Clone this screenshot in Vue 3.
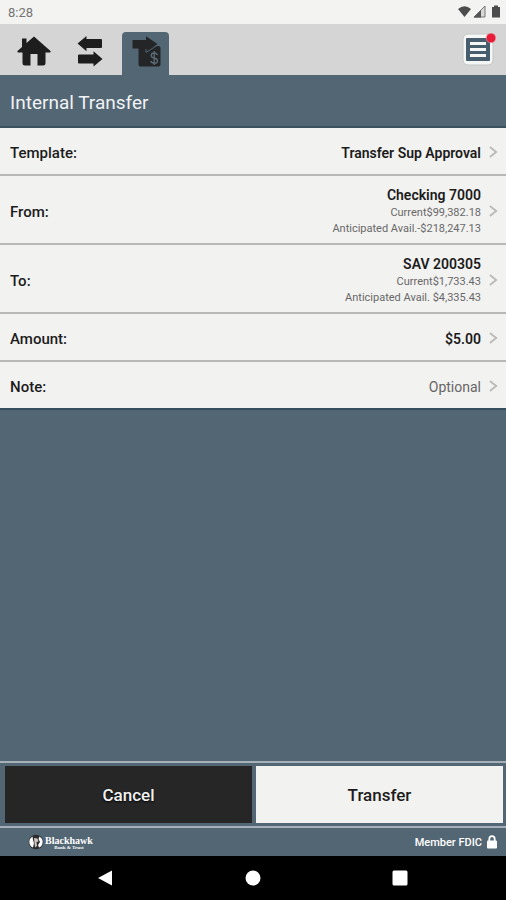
<script setup>
const rows = [
  { label: 'Template:', value: 'Transfer Sup Approval' },
  {
    label: 'From:',
    value: 'Checking 7000',
    details: ['Current$99,382.18', 'Anticipated Avail.-$218,247.13'],
  },
  {
    label: 'To:',
    value: 'SAV 200305',
    details: ['Current$1,733.43', 'Anticipated Avail. $4,335.43'],
  },
  { label: 'Amount:', value: '$5.00' },
  { label: 'Note:', value: 'Optional', placeholder: true },
]
</script>

<template>
  <div class="screen">
    <div class="status">
      <span>8:28</span>
      <svg class="status-icons" viewBox="0 0 44 14" aria-hidden="true">
        <path d="M1 4 Q7.500 -1.500 14 4 L7.500 12 Z" fill="#4c4c4c" />
        <path d="M17 12 L28 1 V12 Z" fill="#d8d8d6" stroke="#777" />
        <path d="M16.500 12.500 L24 5 V12.500 Z" fill="#555" />
        <path d="M35 2 H37 V.5 H41 V2 H43 V12.500 H35 Z" fill="#4c4c4c" />
      </svg>
    </div>

    <nav class="toolbar">
      <button class="tab" aria-label="Home">
        <svg class="home" viewBox="0 0 34 30">
          <path
            d="M17 .5 L9.500 7 V2.500 H5 V11 L.5 15 Q0 16 1 16.500 H5.500 V27 Q5.500 29.500 8 29.500 H13.500 V18 H20.500 V29.500 H26 Q28.500 29.500 28.500 27 V16.500 H33 Q34 16 33.500 15 Z"
            fill="#1d1d1d"
          />
        </svg>
      </button>
      <button class="tab" aria-label="Transfers">
        <svg class="arrows" viewBox="0 0 26 32">
          <path
            d="M.5 7.500 L9.500 0 V3 H24 Q25 3 25 4 V11 Q25 12 24 12 H9.500 V15.300 Z M25.500 23 L16.500 15.300 V18.500 H2 Q1 18.500 1 19.500 V26.500 Q1 27.500 2 27.500 H16.500 V30.500 Z"
            fill="#1d1d1d"
          />
        </svg>
      </button>
      <button class="tab active" aria-label="Internal transfer">
        <svg class="transfer" viewBox="0 0 30 32">
          <path
            d="M8 11 H21 L25 10 H27.500 Q29.500 10 29.500 12 V28.500 Q29.500 30.500 27.500 30.500 H9.500 Q7.500 30.500 7.500 28.500 V12 Z"
            fill="#232526"
          />
          <path d="M1.500 4 H15 V.3 L26.500 8 L15 16 V12.500 H1.500 Z" fill="#232526" />
          <path d="M15 13 V16.500 L27 8.800" fill="none" stroke="#536674" />
          <path
            d="M26.500 19 Q25.500 17 23.200 17 Q20.200 17 20.200 19.500 Q20.200 21.500 23.200 22 Q26.500 22.500 26.500 25 Q26.500 27.200 23.500 27.200 Q20.500 27.200 19.700 25 M23.200 15 V29"
            fill="none"
            stroke="#5b6c78"
            stroke-width="1.300"
          />
        </svg>
      </button>
      <button class="menu" aria-label="Messages">
        <svg viewBox="0 0 34 34">
          <rect x="1" y="1" width="30" height="31" rx="5" fill="#f4f5f5" stroke="#c4c6c7" />
          <rect x="4" y="5" width="24" height="23" rx="1" fill="#465d6e" />
          <path d="M8 10.500 H24 M8 16.500 H24 M8 22.500 H24" stroke="#f4f5f5" stroke-width="2.800" />
          <circle cx="29" cy="5" r="4.800" fill="#e81b38" stroke="#e7a8ae" stroke-width=".6" />
        </svg>
      </button>
    </nav>

    <h1 class="title">Internal Transfer</h1>

    <main class="list">
      <button v-for="row in rows" :key="row.label" class="row">
        <span class="label">{{ row.label }}</span>
        <span class="values">
          <span class="value" :class="{ placeholder: row.placeholder }">{{ row.value }}</span>
          <span v-for="detail in row.details" :key="detail" class="detail">{{ detail }}</span>
        </span>
        <svg class="chevron" viewBox="0 0 10 14" aria-hidden="true">
          <path d="M1 1.500 L8 7 L1 12.500" fill="none" stroke="#b9b9b7" stroke-width="2" />
        </svg>
      </button>
    </main>

    <div class="actions">
      <button class="action cancel">Cancel</button>
      <button class="action confirm">Transfer</button>
    </div>

    <footer class="footer">
      <div class="brand">
        <svg class="emblem" viewBox="0 0 16 16" aria-hidden="true">
          <circle cx="8" cy="8" r="7.300" fill="#2a2b2d" />
          <path d="M4.500 2.500 Q.5 5 1.500 9.500 Q2.500 13 5 13.500 L6 9 L5 6 Z" fill="#fff" />
          <path d="M11.500 2.500 Q15.500 5 14.500 9.500 Q13.500 13 11 13.500 L10 11 L12 8 L10.500 5 Z" fill="#fff" />
          <path d="M6 4 L9.500 4.500 L10.500 7.500 L8.500 8 L9 12 L7 13.500 Z" fill="#cfc5c1" />
        </svg>
        <span class="brand-text">
          <span class="brand-name">Blackhawk</span>
          <span class="brand-sub">Bank &amp; Trust</span>
        </span>
      </div>
      <div class="member">
        <span>Member FDIC</span>
        <svg class="lock" viewBox="0 0 10 14" aria-hidden="true">
          <path d="M2.300 7 V4 Q2.300 1.200 5 1.200 Q7.700 1.200 7.700 4 V7" fill="none" stroke="#fff" stroke-width="1.800" />
          <rect y="5.500" width="10" height="8" rx="1" fill="#fff" />
        </svg>
      </div>
    </footer>

    <nav class="system">
      <button aria-label="Back">
        <svg viewBox="0 0 16 16"><path d="M0 8 L14 .5 V15.500 Z" fill="#fff" /></svg>
      </button>
      <button aria-label="Home screen">
        <svg viewBox="0 0 16 16"><circle cx="8" cy="8" r="7.500" fill="#fff" /></svg>
      </button>
      <button aria-label="Recent apps">
        <svg viewBox="0 0 16 16"><rect x=".5" y=".5" width="15" height="15" rx="1.500" fill="#fff" /></svg>
      </button>
    </nav>
  </div>
</template>

<style>
body {
  margin: 0;
  background: #536674;
}
</style>

<style scoped>
.screen {
  display: flex;
  flex-direction: column;
  min-height: 100vh;
  background: #536674;
  font-family: Roboto, "Liberation Sans", sans-serif;
  color: #1c1c1c;
}
button {
  margin: 0;
  padding: 0;
  border: 0;
  background: none;
  font: inherit;
  color: inherit;
}
svg {
  display: block;
}
.status {
  display: flex;
  align-items: center;
  justify-content: space-between;
  height: 24px;
  padding: 0 5px 0 8px;
  background: #f3f3f1;
  color: #757575;
  font-size: 13px;
}
.status-icons {
  width: 44px;
  height: 14px;
}
.toolbar {
  display: flex;
  align-items: flex-end;
  gap: 9px;
  height: 51px;
  padding: 0 10px;
  background: #d5d5d5;
}
.tab {
  display: flex;
  justify-content: center;
  width: 47px;
  height: 43px;
  padding-top: 4px;
  border-radius: 4px 4px 0 0;
}
.tab.active {
  background: #536674;
}
.home {
  width: 34px;
  height: 30px;
}
.arrows {
  width: 26px;
  height: 32px;
}
.transfer {
  width: 30px;
  height: 32px;
}
.menu {
  align-self: center;
  margin-left: auto;
}
.menu svg {
  width: 34px;
  height: 34px;
}
.title {
  margin: 0;
  padding: 4px 10px 0;
  border-bottom: 2px solid #3b5160;
  font-size: 19px;
  line-height: 47px;
  font-weight: 400;
  color: #f0f3f5;
}
.list {
  flex: 1;
}
.row {
  display: flex;
  align-items: center;
  width: 100%;
  min-height: 48px;
  padding: 10px 8px 6px 10px;
  border-bottom: 2px solid #b8b8b7;
  background: #f2f2f1;
  text-align: right;
}
.row:last-child {
  border-bottom-color: #34505f;
}
.label {
  font-size: 15px;
  font-weight: 500;
}
.values {
  display: flex;
  flex: 1;
  flex-direction: column;
  margin-right: 8px;
}
.value {
  font-size: 14px;
  line-height: 19px;
  font-weight: 600;
}
.value.placeholder {
  font-weight: 400;
  color: #666;
}
.detail {
  font-size: 11px;
  line-height: 16px;
  color: #686868;
}
.chevron {
  width: 9px;
  height: 14px;
  margin-bottom: 2px;
}
.actions {
  display: flex;
  gap: 4px;
  padding: 3px 3px 3px 5px;
  border-top: 2px solid #a5b0b8;
  border-bottom: 2px solid #a5b0b8;
}
.action {
  flex: 1;
  height: 57px;
  font-size: 17px;
  font-weight: 500;
}
.cancel {
  background: #262626;
  color: #f2f2f2;
  text-shadow: 0 1px 2px #000;
}
.confirm {
  background: #f2f2f0;
}
.footer {
  display: flex;
  align-items: center;
  justify-content: space-between;
  height: 28px;
  padding: 0 9px 0 28px;
  color: #fff;
}
.brand {
  display: flex;
  align-items: center;
  gap: 1px;
}
.emblem {
  width: 16px;
  height: 16px;
}
.brand-text {
  display: flex;
  flex-direction: column;
  align-items: center;
  padding-top: 2px;
  font-family: "Liberation Serif", serif;
  font-weight: 700;
}
.brand-name {
  font-size: 10px;
  line-height: 9px;
}
.brand-sub {
  font-size: 5px;
  line-height: 5px;
}
.member {
  display: flex;
  align-items: center;
  gap: 5px;
  font-size: 11px;
  font-weight: 500;
}
.lock {
  width: 10px;
  height: 14px;
}
.system {
  display: flex;
  justify-content: center;
  gap: 131px;
  height: 44px;
  background: #000;
}
.system svg {
  width: 16px;
  height: 16px;
}
</style>
